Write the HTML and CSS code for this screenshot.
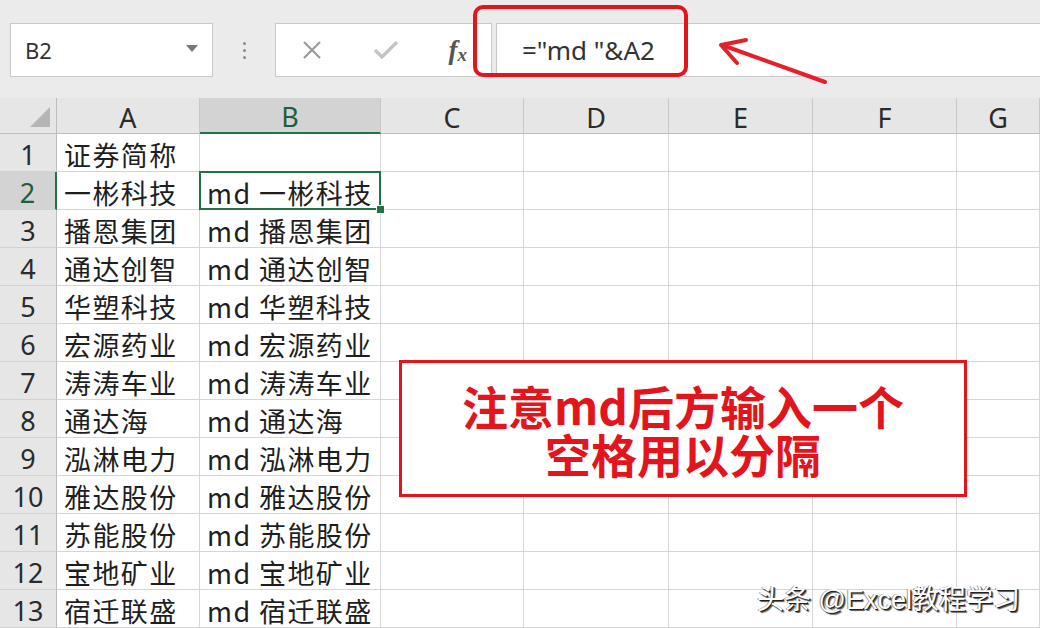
FILE: index.html
```html
<!DOCTYPE html>
<html lang="zh">
<head>
<meta charset="utf-8">
<title>Excel</title>
<link rel="stylesheet" href="styles.css">
</head>
<body>
<div class="page">
  <div class="toolbar">
    <div class="namebox"><span class="name">B2</span><span class="caret"></span></div>
    <div class="dots"><i></i><i></i><i></i></div>
    <div class="fxbox">
      <svg class="ico" width="22" height="22" viewBox="0 0 22 22"><path d="M3 3 L19 19 M19 3 L3 19" stroke="#9b9b9b" stroke-width="2.2" fill="none"/></svg>
      <svg class="ico" width="26" height="22" viewBox="0 0 26 22"><path d="M2 11 L9 18 L24 3" stroke="#c4c4c4" stroke-width="3.2" fill="none"/></svg>
      <span class="fx">f<sub>x</sub></span>
    </div>
    <div class="input"><span class="formula">="md "&amp;A2</span></div>
  </div>

  <div class="sheet">
    <div class="corner"><span class="tri"></span></div>
    <div class="ch">A</div><div class="ch selh">B</div><div class="ch">C</div><div class="ch">D</div><div class="ch">E</div><div class="ch">F</div><div class="ch">G</div>

    <div class="rh">1</div><div class="c">证券简称</div><div class="c"></div><div class="c"></div><div class="c"></div><div class="c"></div><div class="c"></div><div class="c"></div>
    <div class="rh selr">2</div><div class="c">一彬科技</div><div class="c sel">md 一彬科技<span class="handle"></span></div><div class="c"></div><div class="c"></div><div class="c"></div><div class="c"></div><div class="c"></div>
    <div class="rh">3</div><div class="c">播恩集团</div><div class="c">md 播恩集团</div><div class="c"></div><div class="c"></div><div class="c"></div><div class="c"></div><div class="c"></div>
    <div class="rh">4</div><div class="c">通达创智</div><div class="c">md 通达创智</div><div class="c"></div><div class="c"></div><div class="c"></div><div class="c"></div><div class="c"></div>
    <div class="rh">5</div><div class="c">华塑科技</div><div class="c">md 华塑科技</div><div class="c"></div><div class="c"></div><div class="c"></div><div class="c"></div><div class="c"></div>
    <div class="rh">6</div><div class="c">宏源药业</div><div class="c">md 宏源药业</div><div class="c"></div><div class="c"></div><div class="c"></div><div class="c"></div><div class="c"></div>
    <div class="rh">7</div><div class="c">涛涛车业</div><div class="c">md 涛涛车业</div><div class="c"></div><div class="c"></div><div class="c"></div><div class="c"></div><div class="c"></div>
    <div class="rh">8</div><div class="c">通达海</div><div class="c">md 通达海</div><div class="c"></div><div class="c"></div><div class="c"></div><div class="c"></div><div class="c"></div>
    <div class="rh">9</div><div class="c">泓淋电力</div><div class="c">md 泓淋电力</div><div class="c"></div><div class="c"></div><div class="c"></div><div class="c"></div><div class="c"></div>
    <div class="rh">10</div><div class="c">雅达股份</div><div class="c">md 雅达股份</div><div class="c"></div><div class="c"></div><div class="c"></div><div class="c"></div><div class="c"></div>
    <div class="rh">11</div><div class="c">苏能股份</div><div class="c">md 苏能股份</div><div class="c"></div><div class="c"></div><div class="c"></div><div class="c"></div><div class="c"></div>
    <div class="rh">12</div><div class="c">宝地矿业</div><div class="c">md 宝地矿业</div><div class="c"></div><div class="c"></div><div class="c"></div><div class="c"></div><div class="c"></div>
    <div class="rh">13</div><div class="c">宿迁联盛</div><div class="c">md 宿迁联盛</div><div class="c"></div><div class="c"></div><div class="c"></div><div class="c"></div><div class="c"></div>
  </div>

  <div class="hl-box"></div>
  <svg class="arrow" width="1040" height="100" viewBox="0 0 1040 100">
    <path d="M825 82 L722 45" stroke="#e3202b" stroke-width="4" stroke-linecap="round" fill="none"/>
    <path d="M746 40 L721 45 L737 63" stroke="#e3202b" stroke-width="4" stroke-linecap="round" stroke-linejoin="round" fill="none"/>
  </svg>

  <div class="note">
    <p>注意md后方输入一个</p>
    <p>空格用以分隔</p>
  </div>

  <div class="watermark">头条 @Excel教程学习</div>
</div>
</body>
</html>
```

FILE: styles.css
```css
* { box-sizing: border-box; }
html, body { margin: 0; padding: 0; }
body {
  background: #ffffff;
  font-family: "Noto Sans CJK SC", "Noto Sans", sans-serif;
  color: #222;
  overflow: hidden;
}
.page {
  position: relative;
  width: 1040px;
  height: 628px;
  overflow: hidden;
}

/* ---------- toolbar ---------- */
.toolbar {
  height: 98px;
  background: #ebebeb;
  display: flex;
  align-items: flex-start;
  padding: 23px 0 0 10px;
}
.namebox {
  width: 203px;
  height: 54px;
  background: #fff;
  border: 1px solid #c9c9c9;
  display: flex;
  align-items: center;
  justify-content: space-between;
  padding: 0 14px 0 14px;
}
.name {
  font-family: "Noto Sans", "Liberation Sans", sans-serif;
  font-size: 22px;
  color: #333;
}
.caret {
  width: 0; height: 0;
  border-left: 6px solid transparent;
  border-right: 6px solid transparent;
  border-top: 7px solid #777;
  margin-top: -4px;
}
.dots {
  width: 62px;
  height: 54px;
  display: flex;
  flex-direction: column;
  align-items: center;
  justify-content: center;
  gap: 4px;
}
.dots i {
  width: 3px; height: 3px;
  border-radius: 50%;
  background: #8a8a8a;
  display: block;
}
.fxbox {
  width: 217px;
  height: 54px;
  background: #fff;
  border: 1px solid #c9c9c9;
  display: flex;
  align-items: center;
  padding: 0 24px 0 25px;
  justify-content: space-between;
}
.fx {
  font-family: "Liberation Serif", "DejaVu Serif", serif;
  font-style: italic;
  font-weight: bold;
  font-size: 27px;
  color: #555;
  line-height: 1;
}
.fx sub { font-size: 19px; vertical-align: -2px; }
.input {
  flex: 1;
  height: 54px;
  margin-left: 4px;
  margin-right: -2px;
  background: #fff;
  border: 1px solid #c9c9c9;
  display: flex;
  align-items: center;
  padding-left: 25px;
}
.formula {
  font-family: "Noto Sans", "Liberation Sans", sans-serif;
  font-size: 26px;
  color: #333;
}

/* ---------- sheet ---------- */
.sheet {
  display: grid;
  grid-template-columns: 57px 143px 181px 143px 145px 144px 144px 1fr;
  grid-template-rows: 36px repeat(13, 38px);
}
.corner, .ch, .rh, .c {
  border-right: 1px solid #d6d6d6;
  border-bottom: 1px solid #d6d6d6;
}
.corner {
  background: #e6e6e6;
  border-bottom-color: #bdbdbd;
  border-right-color: #bdbdbd;
  position: relative;
}
.tri {
  position: absolute;
  left: 30px; top: 9px;
  width: 0; height: 0;
  border-left: 20px solid transparent;
  border-bottom: 20px solid #b5b5b5;
}
.ch {
  background: #e6e6e6;
  border-right-color: #c8c8c8;
  border-bottom-color: #bdbdbd;
  font-family: "Noto Sans", "Liberation Sans", sans-serif;
  font-size: 27px;
  color: #2b2b2b;
  display: flex;
  align-items: center;
  justify-content: center;
  line-height: 1;
  padding-top: 3px;
}
.ch.selh {
  background: #d3d3d3;
  border-bottom: 2px solid #217346;
  color: #1f5e3a;
}
.rh {
  background: #e6e6e6;
  border-right-color: #bdbdbd;
  border-bottom-color: #d2d2d2;
  font-family: "Noto Sans", "Liberation Sans", sans-serif;
  font-size: 27px;
  line-height: 1;
  color: #2b2b2b;
  display: flex;
  align-items: center;
  justify-content: center;
  padding-top: 4px;
}
.rh.selr {
  background: #d3d3d3;
  border-right: 2px solid #217346;
  color: #1f5e3a;
}
.c {
  font-size: 27px;
  line-height: 1;
  letter-spacing: 1.4px;
  color: #1e1e1e;
  display: flex;
  align-items: center;
  padding: 4px 0 0 7px;
  white-space: nowrap;
  overflow: visible;
}
.c.sel { position: relative; }
.c.sel::after {
  content: "";
  position: absolute;
  left: -1px; top: -1px; right: -1px; bottom: -1px;
  border: 2px solid #217346;
}
.handle {
  position: absolute;
  right: -5px; bottom: -5px;
  width: 9px; height: 9px;
  background: #217346;
  border: 1px solid #fff;
  z-index: 2;
}

/* ---------- overlays ---------- */
.hl-box {
  position: absolute;
  left: 473px; top: 5px;
  width: 215px; height: 72px;
  border: 4px solid #e2141d;
  border-radius: 10px;
}
.arrow {
  position: absolute;
  left: 0; top: 0;
}
.note {
  position: absolute;
  left: 399px; top: 360px;
  width: 568px; height: 137px;
  background: #fff;
  border: 3px solid #e3141c;
  display: flex;
  flex-direction: column;
  align-items: center;
  justify-content: center;
  color: #e3141c;
  font-weight: 700;
  font-size: 46px;
  line-height: 48px;
}
.note p { margin: 0; }
.watermark {
  position: absolute;
  right: 20px; bottom: 14px;
  font-family: "Liberation Sans", "Noto Sans CJK SC", sans-serif;
  font-size: 27px;
  color: #ffffff;
  line-height: 1;
  text-shadow: 1px 1px 0 #222, 2px 2px 1px #555, -1px 0 0 #999;
}
```
